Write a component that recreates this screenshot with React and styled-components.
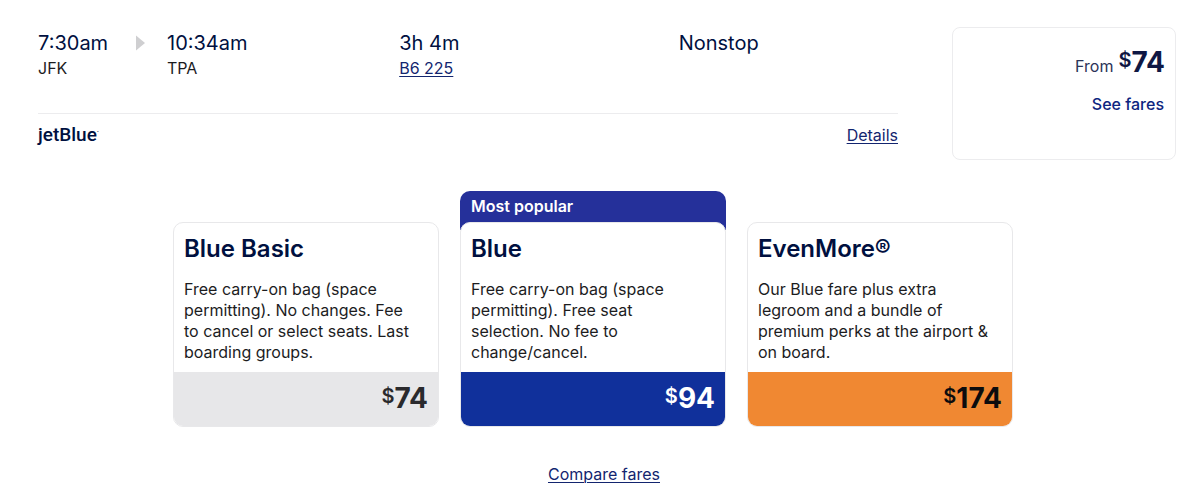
import styled, { createGlobalStyle } from "styled-components";

const GlobalStyle = createGlobalStyle`
  * {
    box-sizing: border-box;
  }

  body {
    margin: 0;
    background-color: #fff;
    color: #1c1c1e;
    font-family: Inter, "Liberation Sans", sans-serif;
    font-size: 16px;
    line-height: 24px;
  }
`;

const Page = styled.main`
  padding: 27px 0 16px;
`;

const Flight = styled.section`
  display: flex;
  align-items: flex-start;
  gap: 54px;
  padding: 0 24px 0 38px;
`;

const Itinerary = styled.div`
  flex: 1;
`;

const Summary = styled.div`
  display: grid;
  grid-template-columns: 30fr 54fr 65fr 51fr;
  padding-bottom: 36px;
  border-bottom: 1px solid #ececee;
`;

const Stop = styled.div`
  line-height: 18px;
`;

const Headline = styled.div`
  display: flex;
  align-items: center;
  color: #00103f;
  font-size: 20px;
  line-height: 32px;
`;

const Arrow = styled.svg`
  width: 9px;
  height: 16px;
  margin-left: 28px;
  fill: #cfcfd1;
`;

const Link = styled.a`
  color: #13256f;
  text-decoration: underline;
  text-decoration-thickness: 1px;
  text-underline-offset: 2px;
`;

const Carrier = styled.div`
  display: flex;
  align-items: center;
  justify-content: space-between;
  padding-top: 9px;
`;

const Logo = styled.span`
  color: #00103f;
  font-family: Roboto, sans-serif;
  font-size: 19px;
  font-weight: 500;
`;

const Mark = styled.sup`
  font-size: 8px;
  line-height: 8px;
`;

const FromCard = styled.div`
  display: flex;
  flex-direction: column;
  align-items: flex-end;
  gap: 14px;
  width: 224px;
  min-height: 133px;
  padding: 18px 10px;
  border: 1px solid #ececee;
  border-radius: 8px;
`;

const From = styled.div`
  display: flex;
  align-items: baseline;
  gap: 5px;
  color: #2b3358;
`;

const Amount = styled.span`
  color: ${(props) => props.$color};
  font-size: 28px;
  font-weight: 700;
  line-height: 32px;
`;

const Currency = styled.span`
  font-size: 20px;
  font-weight: 600;
  line-height: 20px;
  vertical-align: 5px;
`;

const SeeFares = styled.button`
  padding: 0 1px;
  border: 0;
  background: none;
  color: #0d2580;
  font: inherit;
  font-weight: 500;
  cursor: pointer;
`;

const Fares = styled.section`
  display: flex;
  justify-content: center;
  align-items: flex-end;
  gap: 21px;
  padding: 31px 30px 0 16px;
`;

const Fare = styled.div`
  flex: 0 1 266px;
`;

const Banner = styled.div`
  height: 39px;
  margin-bottom: -8px;
  padding: 3px 11px;
  border-radius: 10px 10px 0 0;
  background-color: #25309a;
  color: #fff;
  font-weight: 600;
`;

const FareCard = styled.button`
  position: relative;
  display: block;
  width: 100%;
  padding: 0;
  overflow: hidden;
  border: 1px solid #e8e8ea;
  border-radius: 10px;
  background-color: #fff;
  color: inherit;
  font: inherit;
  text-align: left;
  cursor: pointer;
`;

const FareName = styled.h2`
  margin: 0;
  padding: 10px 10px 14px;
  color: #00103f;
  font-size: 24px;
  font-weight: 600;
  line-height: 32px;
`;

const FareText = styled.p`
  margin: 0;
  padding: 0 20px 9px 10px;
  line-height: 21px;
`;

const FarePrice = styled.div`
  display: flex;
  justify-content: flex-end;
  height: 54px;
  padding: 10px;
  background-color: ${(props) => props.$bg};
`;

const Compare = styled.div`
  padding: 35px 0 0 8px;
  text-align: center;
`;

const fares = [
  {
    name: "Blue Basic",
    text: "Free carry-on bag (space permitting). No changes. Fee to cancel or select seats. Last boarding groups.",
    price: 74,
    bg: "#e7e7e9",
    color: "#2a2a2d",
  },
  {
    name: "Blue",
    text: "Free carry-on bag (space permitting). Free seat selection. No fee to change/cancel.",
    price: 94,
    bg: "#10309b",
    color: "#fff",
    banner: "Most popular",
  },
  {
    name: "EvenMore®",
    text: "Our Blue fare plus extra legroom and a bundle of premium perks at the airport & on board.",
    price: 174,
    bg: "#f08832",
    color: "#0c0c0e",
  },
];

const Price = ({ value, color }) => (
  <Amount $color={color}>
    <Currency>$</Currency>
    {value}
  </Amount>
);

const App = () => {
  return (
    <Page>
      <GlobalStyle />
      <Flight>
        <Itinerary>
          <Summary>
            <Stop>
              <Headline>
                7:30am
                <Arrow viewBox="0 0 9 16" aria-hidden="true">
                  <path d="M0 0.5 L9 8 L0 15.5 Z" />
                </Arrow>
              </Headline>
              JFK
            </Stop>
            <Stop>
              <Headline>10:34am</Headline>
              TPA
            </Stop>
            <Stop>
              <Headline>3h 4m</Headline>
              <Link href="#flight">B6 225</Link>
            </Stop>
            <Stop>
              <Headline>Nonstop</Headline>
            </Stop>
          </Summary>
          <Carrier>
            <Logo>
              jetBlue<Mark>·</Mark>
            </Logo>
            <Link href="#details">Details</Link>
          </Carrier>
        </Itinerary>
        <FromCard>
          <From>
            From
            <Price value={74} color="#0f1743" />
          </From>
          <SeeFares type="button">See fares</SeeFares>
        </FromCard>
      </Flight>
      <Fares>
        {fares.map((fare) => (
          <Fare key={fare.name}>
            {fare.banner && <Banner>{fare.banner}</Banner>}
            <FareCard type="button">
              <FareName>{fare.name}</FareName>
              <FareText>{fare.text}</FareText>
              <FarePrice $bg={fare.bg}>
                <Price value={fare.price} color={fare.color} />
              </FarePrice>
            </FareCard>
          </Fare>
        ))}
      </Fares>
      <Compare>
        <Link href="#compare">Compare fares</Link>
      </Compare>
    </Page>
  );
};

export default App;
